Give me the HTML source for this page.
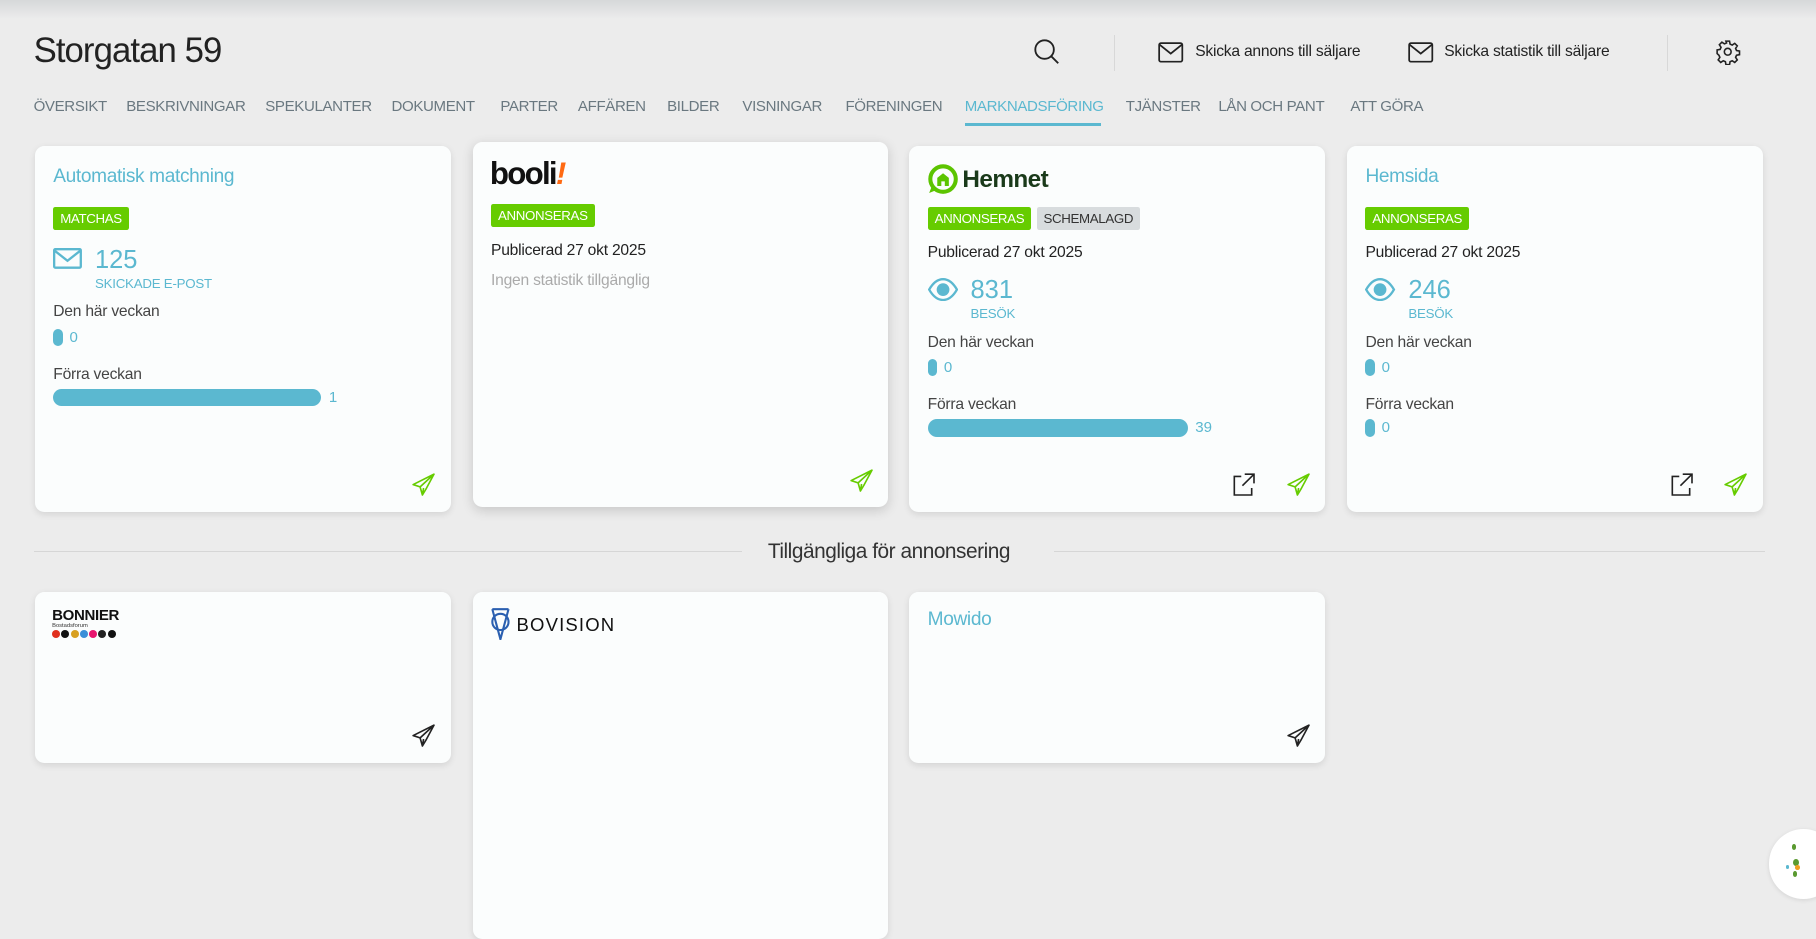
<!DOCTYPE html>
<html><head><meta charset="utf-8">
<style>
html,body{margin:0;padding:0;}
body{width:1568px;height:775px;overflow:hidden;background:#ececec;font-family:"Liberation Sans",sans-serif;position:relative;zoom:1.15816;color:#2a3338;}
.a{position:absolute;white-space:nowrap;}
.topsh{position:absolute;left:0;top:0;width:1568px;height:16px;background:linear-gradient(#d6d8d9,#ececec);}
.title{left:29px;top:28px;font-size:30px;font-weight:300;color:#222;letter-spacing:-0.8px;}
.nav{top:85px;font-size:13px;color:#6a7880;letter-spacing:-0.3px;}
.sep{position:absolute;width:1px;background:#d8d8d8;top:30px;height:31px;}
.hb{font-size:13.5px;color:#222;top:37px;letter-spacing:-0.2px;}
.card{position:absolute;background:#fbfdfd;border-radius:8px;box-shadow:0 2px 6px rgba(0,0,0,0.10);}
.ct{font-size:16.5px;color:#5bb8d0;letter-spacing:-0.3px;}
.badge{position:absolute;height:20px;line-height:20px;border-radius:2px;font-size:11.5px;color:#fff;background:#66cc00;padding:0 6px;letter-spacing:-0.3px;}
.grey{background:#d8dcde;color:#333;}
.t14{font-size:13.5px;color:#444;letter-spacing:-0.2px;}
.big{font-size:22px;color:#5bb8d0;font-weight:300;}
.sm{font-size:11.5px;color:#5bb8d0;letter-spacing:-0.2px;}
.bar{position:absolute;height:15px;border-radius:8px;background:#5bb8d0;}
.bv{font-size:13px;color:#5bb8d0;}
</style></head><body>
<div class="topsh"></div>
<div class="a title">Storgatan 59</div>

<svg class="a" style="left:892px;top:33px" width="24" height="24" viewBox="0 0 24 24" fill="none" stroke="#222" stroke-width="1.6"><circle cx="10" cy="10" r="8"/><path d="M15.8 15.8l6 6"/></svg>
<div class="sep" style="left:962px"></div>
<svg class="a" style="left:1000px;top:36px" width="22" height="18" viewBox="0 0 22 18" fill="none" stroke="#222" stroke-width="1.5"><rect x="1" y="1" width="20" height="16" rx="1.5"/><path d="M1 2l10 8 10-8"/></svg>
<div class="a hb" style="left:1032px">Skicka annons till säljare</div>
<svg class="a" style="left:1216px;top:36px" width="22" height="18" viewBox="0 0 22 18" fill="none" stroke="#222" stroke-width="1.5"><rect x="1" y="1" width="20" height="16" rx="1.5"/><path d="M1 2l10 8 10-8"/></svg>
<div class="a hb" style="left:1247px">Skicka statistik till säljare</div>
<div class="sep" style="left:1439px"></div>
<svg class="a" style="left:1481px;top:34px" width="22" height="22" viewBox="0 0 24 24" fill="none" stroke="#222" stroke-width="1.5"><circle cx="12" cy="12" r="3.2"/><path d="M10.3 2h3.4l.5 2.8 2 .9 2.4-1.6 2.4 2.4-1.6 2.4.9 2 2.8.5v3.4l-2.8.5-.9 2 1.6 2.4-2.4 2.4-2.4-1.6-2 .9-.5 2.8h-3.4l-.5-2.8-2-.9-2.4 1.6-2.4-2.4 1.6-2.4-.9-2L2 13.7v-3.4l2.8-.5.9-2-1.6-2.4 2.4-2.4 2.4 1.6 2-.9z"/></svg>

<div class="a nav" style="left:29px">ÖVERSIKT</div>
<div class="a nav" style="left:109px">BESKRIVNINGAR</div>
<div class="a nav" style="left:229px">SPEKULANTER</div>
<div class="a nav" style="left:338px">DOKUMENT</div>
<div class="a nav" style="left:432px">PARTER</div>
<div class="a nav" style="left:499px">AFFÄREN</div>
<div class="a nav" style="left:576px">BILDER</div>
<div class="a nav" style="left:641px">VISNINGAR</div>
<div class="a nav" style="left:730px">FÖRENINGEN</div>
<div class="a nav" style="left:833px;color:#5bb8d0">MARKNADSFÖRING</div>
<div class="a" style="left:833px;top:106px;width:118px;height:3px;background:#5bb8d0"></div>
<div class="a nav" style="left:972px">TJÄNSTER</div>
<div class="a nav" style="left:1052px">LÅN OCH PANT</div>
<div class="a nav" style="left:1166px">ATT GÖRA</div>

<!-- card 1 -->
<div class="card" style="left:30px;top:126px;width:359px;height:316px">
 <div class="a ct" style="left:16px;top:17px">Automatisk matchning</div>
 <div class="badge" style="left:16px;top:53px">MATCHAS</div>
 <svg class="a" style="left:16px;top:88px" width="25" height="18" viewBox="0 0 25 18" fill="none" stroke="#5bb8d0" stroke-width="2"><rect x="1" y="1" width="23" height="16" rx="1"/><path d="M1 2l11.5 9 11.5-9"/></svg>
 <div class="a big" style="left:52px;top:86px">125</div>
 <div class="a sm" style="left:52px;top:112px">SKICKADE E-POST</div>
 <div class="a t14" style="left:16px;top:136px">Den här veckan</div>
 <div class="bar" style="left:16px;top:158px;width:8px"></div>
 <div class="a bv" style="left:30px;top:158px">0</div>
 <div class="a t14" style="left:16px;top:190px">Förra veckan</div>
 <div class="bar" style="left:16px;top:210px;width:231px"></div>
 <div class="a bv" style="left:254px;top:210px">1</div>
 <svg class="a" style="left:326px;top:282px" width="20" height="20" viewBox="0 0 20 20" fill="none" stroke="#66cc00" stroke-width="1.4" stroke-linejoin="round"><path d="M19 1L1 10l6 2 2 7 3-5 7-13zM7 12L19 1M9 19l1-6"/></svg>
</div>

<!-- booli -->
<div class="card" style="left:408px;top:123px;width:359px;height:315px;box-shadow:0 3px 10px rgba(0,0,0,0.16)">
 <div class="a" style="left:15px;top:12px;font-size:27px;font-weight:bold;color:#111;letter-spacing:-1.5px">booli<span style="color:#ff6a13;font-style:italic">!</span></div>
 <div class="badge" style="left:16px;top:53px">ANNONSERAS</div>
 <div class="a t14" style="left:16px;top:86px;color:#222">Publicerad 27 okt 2025</div>
 <div class="a t14" style="left:16px;top:112px;color:#aaa">Ingen statistik tillgänglig</div>
 <svg class="a" style="left:326px;top:282px" width="20" height="20" viewBox="0 0 20 20" fill="none" stroke="#66cc00" stroke-width="1.4" stroke-linejoin="round"><path d="M19 1L1 10l6 2 2 7 3-5 7-13zM7 12L19 1M9 19l1-6"/></svg>
</div>

<!-- hemnet -->
<div class="card" style="left:785px;top:126px;width:359px;height:316px">
 <svg class="a" style="left:16px;top:16px" width="26" height="26" viewBox="0 0 26 26"><circle cx="13" cy="13" r="11" fill="none" stroke="#5cc400" stroke-width="3.5"/><path d="M8 19v-7l5-4 5 4v7h-3.5v-4h-3v4z" fill="#5cc400"/><path d="M3 20l-2 5 5-2" fill="#5cc400"/></svg>
 <div class="a" style="left:46px;top:17px;font-size:21px;font-weight:bold;color:#1a3a1a;letter-spacing:-0.5px">Hemnet</div>
 <div class="badge" style="left:16px;top:53px">ANNONSERAS</div>
 <div class="badge grey" style="left:110px;top:53px">SCHEMALAGD</div>
 <div class="a t14" style="left:16px;top:85px;color:#222">Publicerad 27 okt 2025</div>
 <svg class="a" style="left:16px;top:114px" width="26" height="20" viewBox="0 0 26 20" fill="none" stroke="#5bb8d0" stroke-width="2"><path d="M1 10C5 3 9 1 13 1s8 2 12 9c-4 7-8 9-12 9S5 17 1 10z"/><circle cx="13" cy="10" r="4.5" fill="#5bb8d0"/></svg>
 <div class="a big" style="left:53px;top:112px">831</div>
 <div class="a sm" style="left:53px;top:138px">BESÖK</div>
 <div class="a t14" style="left:16px;top:162px">Den här veckan</div>
 <div class="bar" style="left:16px;top:184px;width:8px"></div>
 <div class="a bv" style="left:30px;top:184px">0</div>
 <div class="a t14" style="left:16px;top:216px">Förra veckan</div>
 <div class="bar" style="left:16px;top:236px;width:225px"></div>
 <div class="a bv" style="left:247px;top:236px">39</div>
 <svg class="a" style="left:279px;top:282px" width="20" height="20" viewBox="0 0 20 20" fill="none" stroke="#222" stroke-width="1.4"><path d="M8 3H2v16h15v-6M11 1h8v8M19 1L9 11"/></svg>
 <svg class="a" style="left:326px;top:282px" width="20" height="20" viewBox="0 0 20 20" fill="none" stroke="#66cc00" stroke-width="1.4" stroke-linejoin="round"><path d="M19 1L1 10l6 2 2 7 3-5 7-13zM7 12L19 1M9 19l1-6"/></svg>
</div>

<!-- hemsida -->
<div class="card" style="left:1163px;top:126px;width:359px;height:316px">
 <div class="a ct" style="left:16px;top:17px">Hemsida</div>
 <div class="badge" style="left:16px;top:53px">ANNONSERAS</div>
 <div class="a t14" style="left:16px;top:85px;color:#222">Publicerad 27 okt 2025</div>
 <svg class="a" style="left:16px;top:114px" width="26" height="20" viewBox="0 0 26 20" fill="none" stroke="#5bb8d0" stroke-width="2"><path d="M1 10C5 3 9 1 13 1s8 2 12 9c-4 7-8 9-12 9S5 17 1 10z"/><circle cx="13" cy="10" r="4.5" fill="#5bb8d0"/></svg>
 <div class="a big" style="left:53px;top:112px">246</div>
 <div class="a sm" style="left:53px;top:138px">BESÖK</div>
 <div class="a t14" style="left:16px;top:162px">Den här veckan</div>
 <div class="bar" style="left:16px;top:184px;width:8px"></div>
 <div class="a bv" style="left:30px;top:184px">0</div>
 <div class="a t14" style="left:16px;top:216px">Förra veckan</div>
 <div class="bar" style="left:16px;top:236px;width:8px"></div>
 <div class="a bv" style="left:30px;top:236px">0</div>
 <svg class="a" style="left:279px;top:282px" width="20" height="20" viewBox="0 0 20 20" fill="none" stroke="#222" stroke-width="1.4"><path d="M8 3H2v16h15v-6M11 1h8v8M19 1L9 11"/></svg>
 <svg class="a" style="left:326px;top:282px" width="20" height="20" viewBox="0 0 20 20" fill="none" stroke="#66cc00" stroke-width="1.4" stroke-linejoin="round"><path d="M19 1L1 10l6 2 2 7 3-5 7-13zM7 12L19 1M9 19l1-6"/></svg>
</div>

<!-- divider -->
<div class="a" style="left:29px;top:476px;width:612px;height:1px;background:#d6d6d6"></div>
<div class="a" style="left:910px;top:476px;width:614px;height:1px;background:#d6d6d6"></div>
<div class="a" style="left:663px;top:466px;font-size:18px;color:#333;font-weight:300;letter-spacing:-0.4px">Tillgängliga för annonsering</div>

<!-- row 2 -->
<div class="card" style="left:30px;top:511px;width:359px;height:148px">
 <div class="a" style="left:15px;top:13px;font-size:13px;font-weight:bold;color:#111;letter-spacing:-0.3px">BONNIER</div>
 <div class="a" style="left:15px;top:27px;font-size:5px;color:#333">Bostadsforum</div>
 <div class="a" style="left:15px;top:33px;display:flex;gap:1px">
  <span style="width:7px;height:7px;border-radius:50%;background:#e0301e"></span><span style="width:7px;height:7px;border-radius:50%;background:#111"></span><span style="width:7px;height:7px;border-radius:50%;background:#d8a020"></span><span style="width:7px;height:7px;border-radius:50%;background:#3a8fd8"></span><span style="width:7px;height:7px;border-radius:50%;background:#e8156e"></span><span style="width:7px;height:7px;border-radius:50%;background:#222"></span><span style="width:7px;height:7px;border-radius:50%;background:#111"></span>
 </div>
 <svg class="a" style="left:326px;top:114px" width="20" height="20" viewBox="0 0 20 20" fill="none" stroke="#222" stroke-width="1.4" stroke-linejoin="round"><path d="M19 1L1 10l6 2 2 7 3-5 7-13zM7 12L19 1M9 19l1-6"/></svg>
</div>
<div class="card" style="left:408px;top:511px;width:359px;height:300px">
 <svg class="a" style="left:15px;top:14px" width="18" height="28" viewBox="0 0 18 28" fill="none" stroke="#2a5fb0" stroke-width="1.8"><path d="M2 1h14M2 1l7 26 7-26"/><circle cx="9" cy="12" r="7"/></svg>
 <div class="a" style="left:38px;top:19px;font-size:16px;color:#111;letter-spacing:1px">BOVISION</div>
</div>
<div class="card" style="left:785px;top:511px;width:359px;height:148px">
 <div class="a ct" style="left:16px;top:15px">Mowido</div>
 <svg class="a" style="left:326px;top:114px" width="20" height="20" viewBox="0 0 20 20" fill="none" stroke="#222" stroke-width="1.4" stroke-linejoin="round"><path d="M19 1L1 10l6 2 2 7 3-5 7-13zM7 12L19 1M9 19l1-6"/></svg>
</div>

<div class="a" style="left:1527px;top:716px;width:60px;height:60px;border-radius:50%;background:#fff;box-shadow:0 1px 4px rgba(0,0,0,0.1)">
 <span class="a" style="left:20px;top:13px;width:4px;height:5px;border-radius:50%;background:#5a9a30"></span>
 <span class="a" style="left:21px;top:26px;width:5px;height:6px;border-radius:50%;background:#5a9a30"></span>
 <span class="a" style="left:15px;top:31px;width:3px;height:3px;border-radius:50%;background:#5bb8d0"></span>
 <span class="a" style="left:23px;top:31px;width:4px;height:4px;border-radius:50%;background:#f0a020"></span>
 <span class="a" style="left:21px;top:36px;width:4px;height:5px;border-radius:50%;background:#5a9a30"></span>
</div>
</body></html>
